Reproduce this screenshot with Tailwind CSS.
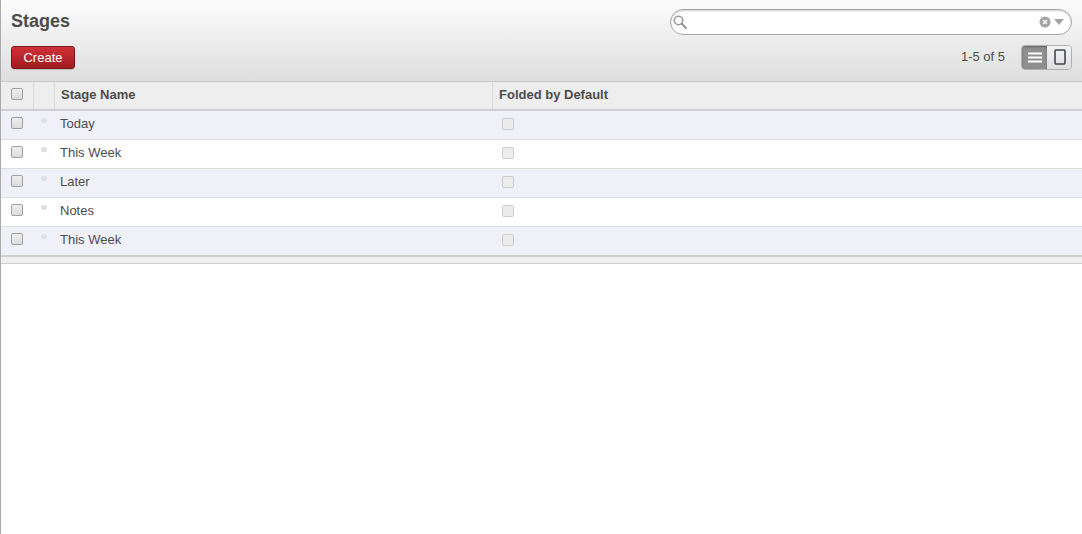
<!DOCTYPE html>
<html>
<head>
<meta charset="utf-8">
<script src="https://cdn.jsdelivr.net/npm/@tailwindcss/browser@4"></script>
</head>
<body class="bg-white">
<div class="w-[1082px] h-[534px] overflow-hidden border-l border-[#aaaaaa] bg-white text-[13px] text-[#4c4c4c] font-['Liberation_Sans',Arial,sans-serif]">
  <div class="h-[82px] border-b border-[#cacaca] bg-gradient-to-b from-[#fcfcfc] to-[#dedede] pl-[10px] pr-[10px] flex flex-col">
    <div class="h-[44px] flex items-start justify-between">
      <h1 class="mt-[10px] text-[18px] leading-[22px] font-bold text-[#4c4c4c]">Stages</h1>
      <div class="mt-[9px] w-[402px] h-[26px] rounded-[13px] border border-[#a8a8a8] bg-white shadow-[inset_0_1px_2px_rgba(0,0,0,0.2)] flex items-center justify-between pl-[1px] pr-[7px]">
        <svg width="16" height="16" viewBox="0 0 16 16" fill="none" stroke="#9a9a9a"><circle cx="6.5" cy="6.5" r="4.2" stroke-width="1.6"/><path d="M9.8 9.8 14 14" stroke-width="2.2" stroke-linecap="round"/></svg>
        <div class="flex items-center gap-[3px]">
          <svg width="12" height="12" viewBox="0 0 12 12"><circle cx="6" cy="6" r="5.5" fill="#a3a3a3"/><path d="M4 4l4 4M8 4l-4 4" stroke="#fff" stroke-width="1.4"/></svg>
          <svg width="10" height="6" viewBox="0 0 10 6"><path d="M0 0h10L5 6z" fill="#a3a3a3"/></svg>
        </div>
      </div>
    </div>
    <div class="h-[26px] flex items-center justify-between">
      <button class="w-[64px] h-[23px] rounded-[3px] border border-[#7a171b] bg-gradient-to-b from-[#d03238] to-[#9f1b20] text-white text-[13px] leading-none shadow-[0_1px_1px_rgba(0,0,0,0.15)]">Create</button>
      <div class="flex items-center">
        <span class="text-[13px] text-[#4c4c4c] mr-[16px]">1-5 of 5</span>
        <div class="w-[51px] h-[25px] flex rounded-[4px] border border-[#b0b0b0] overflow-hidden">
          <div class="w-[25px] bg-[#8f8f8f] shadow-[inset_0_1px_2px_rgba(0,0,0,0.3)] flex items-center justify-center">
            <svg width="14" height="11" viewBox="0 0 14 11" fill="#fff"><rect y="0.5" width="14" height="2"/><rect y="4.5" width="14" height="2"/><rect y="8.5" width="14" height="2"/></svg>
          </div>
          <div class="flex-1 pl-[1px] bg-gradient-to-b from-[#f4f4f4] to-[#dedede] flex items-center justify-center">
            <svg width="12" height="16" viewBox="0 0 12 16" fill="none"><rect x="1" y="1" width="10" height="14" rx="1" stroke="#3f4450" stroke-width="1.6"/></svg>
          </div>
        </div>
      </div>
    </div>
  </div>

  <div class="h-[29px] flex items-stretch bg-[#eeeeee] border-b-2 border-[#cfcfcf] font-bold">
    <div class="w-[33px] border-r border-[#dcdcdc] flex items-center pl-[10px] pb-[3px]">
      <span class="block w-[12px] h-[12px] rounded-[2px] border border-[#a0a0a0] bg-gradient-to-b from-[#eeeeee] to-[#dcdcdc]"></span>
    </div>
    <div class="w-[21px] border-r border-[#dcdcdc]"></div>
    <div class="w-[438px] border-r border-[#dcdcdc] flex items-center pl-[6px] pb-[1px]">Stage Name</div>
    <div class="flex-1 flex items-center pl-[6px] pb-[1px]">Folded by Default</div>
  </div>

  <div class="h-[29px] flex items-center bg-[#f0f0f8] border-b border-[#dddddd]">
    <div class="w-[33px] pl-[10px] pb-[4px] flex"><span class="block w-[12px] h-[12px] rounded-[2px] border border-[#a0a0a0] bg-gradient-to-b from-[#eeeeee] to-[#dcdcdc]"></span></div>
    <div class="w-[21px] pl-[7px] pb-[10px] flex"><span class="block w-[6px] h-[5px] rounded-full bg-[#e0e0e0]"></span></div>
    <div class="w-[439px] pl-[5px] pb-[3px]">Today</div>
    <div class="pl-[8px] pb-[2px]"><span class="block w-[12px] h-[12px] rounded-[2px] border border-[#cccccc] bg-[#ececec]"></span></div>
  </div>
  <div class="h-[29px] flex items-center bg-white border-b border-[#dddddd]">
    <div class="w-[33px] pl-[10px] pb-[4px] flex"><span class="block w-[12px] h-[12px] rounded-[2px] border border-[#a0a0a0] bg-gradient-to-b from-[#eeeeee] to-[#dcdcdc]"></span></div>
    <div class="w-[21px] pl-[7px] pb-[10px] flex"><span class="block w-[6px] h-[5px] rounded-full bg-[#e0e0e0]"></span></div>
    <div class="w-[439px] pl-[5px] pb-[3px]">This Week</div>
    <div class="pl-[8px] pb-[2px]"><span class="block w-[12px] h-[12px] rounded-[2px] border border-[#cccccc] bg-[#ececec]"></span></div>
  </div>
  <div class="h-[29px] flex items-center bg-[#f0f0f8] border-b border-[#dddddd]">
    <div class="w-[33px] pl-[10px] pb-[4px] flex"><span class="block w-[12px] h-[12px] rounded-[2px] border border-[#a0a0a0] bg-gradient-to-b from-[#eeeeee] to-[#dcdcdc]"></span></div>
    <div class="w-[21px] pl-[7px] pb-[10px] flex"><span class="block w-[6px] h-[5px] rounded-full bg-[#e0e0e0]"></span></div>
    <div class="w-[439px] pl-[5px] pb-[3px]">Later</div>
    <div class="pl-[8px] pb-[2px]"><span class="block w-[12px] h-[12px] rounded-[2px] border border-[#cccccc] bg-[#ececec]"></span></div>
  </div>
  <div class="h-[29px] flex items-center bg-white border-b border-[#dddddd]">
    <div class="w-[33px] pl-[10px] pb-[4px] flex"><span class="block w-[12px] h-[12px] rounded-[2px] border border-[#a0a0a0] bg-gradient-to-b from-[#eeeeee] to-[#dcdcdc]"></span></div>
    <div class="w-[21px] pl-[7px] pb-[10px] flex"><span class="block w-[6px] h-[5px] rounded-full bg-[#e0e0e0]"></span></div>
    <div class="w-[439px] pl-[5px] pb-[3px]">Notes</div>
    <div class="pl-[8px] pb-[2px]"><span class="block w-[12px] h-[12px] rounded-[2px] border border-[#cccccc] bg-[#ececec]"></span></div>
  </div>
  <div class="h-[28px] flex items-center bg-[#f0f0f8]">
    <div class="w-[33px] pl-[10px] pb-[4px] flex"><span class="block w-[12px] h-[12px] rounded-[2px] border border-[#a0a0a0] bg-gradient-to-b from-[#eeeeee] to-[#dcdcdc]"></span></div>
    <div class="w-[21px] pl-[7px] pb-[10px] flex"><span class="block w-[6px] h-[5px] rounded-full bg-[#e0e0e0]"></span></div>
    <div class="w-[439px] pl-[5px] pb-[3px]">This Week</div>
    <div class="pl-[8px] pb-[2px]"><span class="block w-[12px] h-[12px] rounded-[2px] border border-[#cccccc] bg-[#ececec]"></span></div>
  </div>
  <div class="h-[9px] bg-[#f0f0f0] border-t-2 border-b border-t-[#cfcfcf] border-b-[#cfcfcf]"></div>
</div>
</body>
</html>
